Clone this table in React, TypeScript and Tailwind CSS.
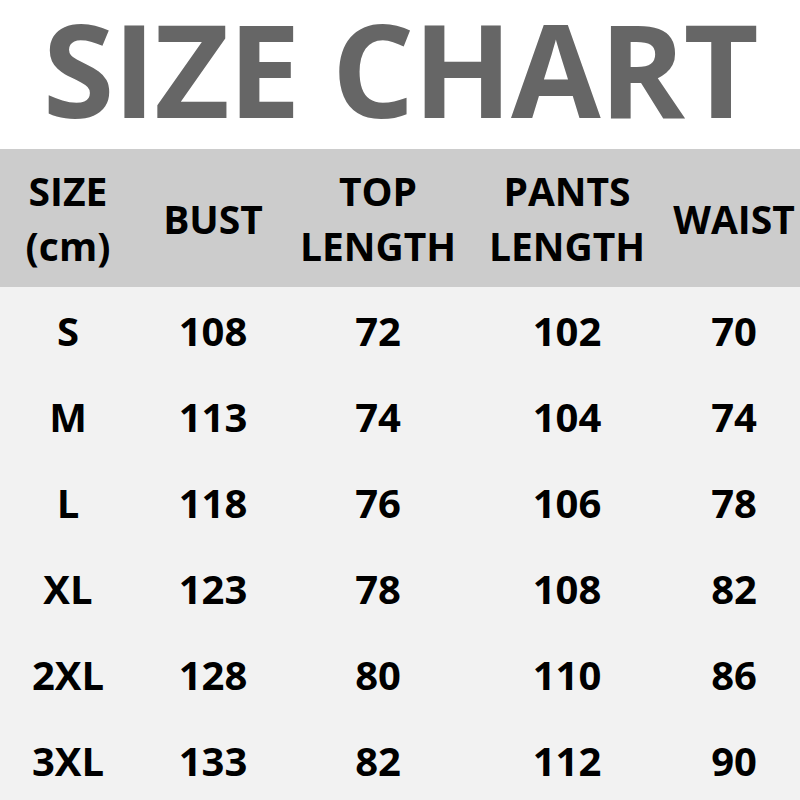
import React from 'react';

const headers = [
  ['SIZE', '(cm)'],
  ['BUST'],
  ['TOP', 'LENGTH'],
  ['PANTS', 'LENGTH'],
  ['WAIST'],
];

const rows = [
  ['S', '108', '72', '102', '70'],
  ['M', '113', '74', '104', '74'],
  ['L', '118', '76', '106', '78'],
  ['XL', '123', '78', '108', '82'],
  ['2XL', '128', '80', '110', '86'],
  ['3XL', '133', '82', '112', '90'],
];

const cols = 'grid grid-cols-[136px_154px_176px_202px_132px]';

export default function App() {
  return (
    <div className="w-[800px] h-[800px] overflow-hidden bg-white font-['Open_Sans',sans-serif] font-bold">
      <div className="h-[149px] flex items-center justify-center pb-[14px]">
        <span className="text-[#666666] text-[130px] leading-none tracking-[-1.5px] whitespace-nowrap">SIZE CHART</span>
      </div>
      <div className={`${cols} h-[138px] bg-[#cccccc] text-black text-[39px] leading-[55px]`}>
        {headers.map((h, i) => (
          <div key={i} className="flex flex-col items-center justify-center text-center">
            {h.map((line) => (
              <span key={line}>{line}</span>
            ))}
          </div>
        ))}
      </div>
      <div className="bg-[#f2f2f2] h-[513px] pt-[1px]">
        {rows.map((r) => (
          <div key={r[0]} className={`${cols} h-[86px] text-black text-[40px]`}>
            {r.map((c, i) => (
              <div key={i} className="flex items-center justify-center">
                {c}
              </div>
            ))}
          </div>
        ))}
      </div>
    </div>
  );
}
